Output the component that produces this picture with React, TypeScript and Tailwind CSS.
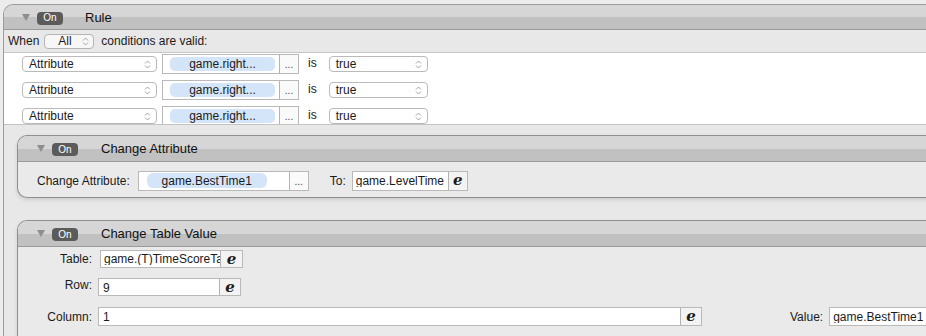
import type { ReactNode } from 'react';

function Disclosure() {
  return (
    <svg width="8" height="7" viewBox="0 0 8 7" className="shrink-0">
      <path d="M0 0h8L4 7z" fill="#8e8e8e" />
    </svg>
  );
}

function OnBadge() {
  return (
    <span className="inline-flex h-[13px] w-[26px] shrink-0 items-center justify-center rounded-[4px] bg-[#5b5b5b] text-[10px] leading-none text-white">
      On
    </span>
  );
}

function UpDown() {
  return (
    <svg width="7" height="11" viewBox="0 0 7 11" fill="none" stroke="#a3a3a3" strokeWidth="1" className="shrink-0">
      <path d="M1 4.5l2.5-2.5L6 4.5M1 6.5l2.5 2.5L6 6.5" />
    </svg>
  );
}

function PopUp({ label, className }: { label: string; className: string }) {
  return (
    <div className={`flex h-[16px] shrink-0 items-center justify-between rounded-[4px] border border-[#bababa] bg-white pr-[5px] ${className}`}>
      <span className="leading-none">{label}</span>
      <UpDown />
    </div>
  );
}

function EButton({ className }: { className: string }) {
  return (
    <div className={`flex h-full shrink-0 items-center justify-center border-l border-[#b3b3b3] bg-[#f3f3f3] ${className}`}>
      <span className="font-['DejaVu_Serif',serif] text-[15px] font-black italic leading-none">e</span>
    </div>
  );
}

function DotsButton() {
  return (
    <div className="flex h-full w-[19px] shrink-0 items-end justify-center border-l border-[#b3b3b3] bg-[#fafafa] pb-[3px] text-[10px] leading-none text-[#444]">
      ...
    </div>
  );
}

function CardHeader({ title }: { title: string }) {
  return (
    <div className="flex h-[26px] shrink-0 items-center border-b border-[#9a9a9a] bg-[linear-gradient(#d6d6d6_0_52%,#c1c1c1_52%)] pl-[19px]">
      <Disclosure />
      <span className="ml-[7px]">
        <OnBadge />
      </span>
      <span className="ml-[23px] text-[13px] leading-none text-[#111]">{title}</span>
    </div>
  );
}

function Card({ title, children, className }: { title: string; children: ReactNode; className: string }) {
  return (
    <div className={`flex shrink-0 flex-col overflow-hidden rounded-l-[10px] border border-r-0 border-[#8f8f8f] bg-[#eaeaea] shadow-[0_2px_4px_rgba(0,0,0,0.12)] ${className}`}>
      <CardHeader title={title} />
      {children}
    </div>
  );
}

function ConditionRow() {
  return (
    <div className="flex h-[20px] shrink-0 items-center pl-[18px]">
      <PopUp label="Attribute" className="w-[135px] pl-[6px]" />
      <div className="ml-[5px] flex h-[20px] w-[137px] items-center border border-[#b9b9b9] bg-white">
        <div className="ml-[7px] flex h-[14px] w-[105px] items-center justify-center rounded-[5px] bg-[#d4e5f9] leading-none">
          game.right...
        </div>
        <div className="flex-1" />
        <DotsButton />
      </div>
      <span className="ml-[9px] -mt-[3px] leading-none">is</span>
      <PopUp label="true" className="ml-[12px] w-[99px] pl-[6px]" />
    </div>
  );
}

export default function App() {
  return (
    <div className="h-[336px] w-[926px] overflow-hidden bg-[#ececec] pl-[3px] pt-[4px] font-['Liberation_Sans',Arial,sans-serif] text-[12px] text-[#1b1b1b]">
      <div className="flex h-[340px] w-[940px] flex-col overflow-hidden rounded-tl-[10px] border-l border-t border-[#9c9c9c] bg-[#e8e8e8]">
        {/* Rule header */}
        <div className="flex h-[25px] shrink-0 items-center border-b border-[#999] bg-[linear-gradient(#d6d6d6_0_50%,#c1c1c1_50%)] pl-[18px]">
          <Disclosure />
          <span className="ml-[7px]">
            <OnBadge />
          </span>
          <span className="ml-[22px] text-[13px] leading-none text-[#111]">Rule</span>
        </div>

        {/* When row */}
        <div className="flex h-[23px] shrink-0 items-center border-b border-[#c6c6c6] bg-[#e8e8e8] pl-[4px]">
          <span className="leading-none">When</span>
          <div className="ml-[5px] flex h-[15px] w-[50px] items-center justify-between rounded-[4px] border border-[#b5b5b5] bg-[#f7f7f7] pl-[13px] pr-[4px]">
            <span className="leading-none">All</span>
            <UpDown />
          </div>
          <span className="ml-[7px] leading-none">conditions are valid:</span>
        </div>

        {/* Conditions */}
        <div className="flex h-[72px] shrink-0 flex-col gap-[6px] overflow-hidden border-b border-[#c4c4c4] bg-white pt-[1px]">
          <ConditionRow />
          <ConditionRow />
          <ConditionRow />
        </div>

        {/* Actions */}
        <div className="flex flex-col pl-[13px] pt-[10px]">
          <Card title="Change Attribute" className="h-[63px]">
            <div className="flex h-[35px] items-center pl-[19px] pt-[2px]">
              <span className="leading-none">Change Attribute:</span>
              <div className="ml-[8px] flex h-[20px] w-[171px] items-center border border-[#b9b9b9] bg-white">
                <div className="ml-[8px] flex h-[15px] w-[120px] items-center justify-center rounded-[6px] bg-[#d4e5f9] leading-none">
                  game.BestTime1
                </div>
                <div className="flex-1" />
                <DotsButton />
              </div>
              <span className="ml-[21px] leading-none">To:</span>
              <div className="ml-[6px] flex h-[20px] items-center border border-[#b9b9b9] bg-white">
                <span className="w-[95px] overflow-hidden whitespace-nowrap pl-[3px] leading-none">game.LevelTime</span>
                <EButton className="w-[19px]" />
              </div>
            </div>
          </Card>

          <Card title="Change Table Value" className="mt-[22px] h-[130px]">
            <div className="flex flex-col pt-[3px]">
              <div className="flex h-[18px] items-center">
                <span className="w-[75px] pr-[1px] text-right leading-none">Table:</span>
                <div className="ml-[7px] flex h-[18px] items-center border border-[#b9b9b9] bg-white">
                  <div className="w-[119px] overflow-hidden pl-[3px]">
                    <span className="block w-[130px] whitespace-nowrap leading-none">game.(T)TimeScoreTal</span>
                  </div>
                  <EButton className="w-[22px]" />
                </div>
              </div>
              <div className="mt-[10px] flex h-[18px] items-center">
                <span className="-mt-[4px] w-[75px] pr-[1px] text-right leading-none">Row:</span>
                <div className="ml-[5px] flex h-[18px] items-center border border-[#b9b9b9] bg-white">
                  <span className="w-[120px] overflow-hidden whitespace-nowrap pl-[4px] pt-[2px] leading-none">9</span>
                  <EButton className="w-[21px]" />
                </div>
              </div>
              <div className="mt-[11px] flex h-[19px] items-center">
                <span className="w-[75px] pr-[1px] text-right leading-none">Column:</span>
                <div className="ml-[5px] flex h-[19px] items-center border border-[#b9b9b9] bg-white">
                  <span className="w-[581px] overflow-hidden whitespace-nowrap pl-[4px] leading-none">1</span>
                  <EButton className="w-[21px]" />
                </div>
                <span className="ml-[88px] leading-none">Value:</span>
                <div className="ml-[6px] flex h-[19px] w-[110px] items-center border border-[#b9b9b9] bg-white">
                  <span className="overflow-hidden whitespace-nowrap pl-[3px] leading-none">game.BestTime1</span>
                </div>
              </div>
            </div>
          </Card>
        </div>
      </div>
    </div>
  );
}
